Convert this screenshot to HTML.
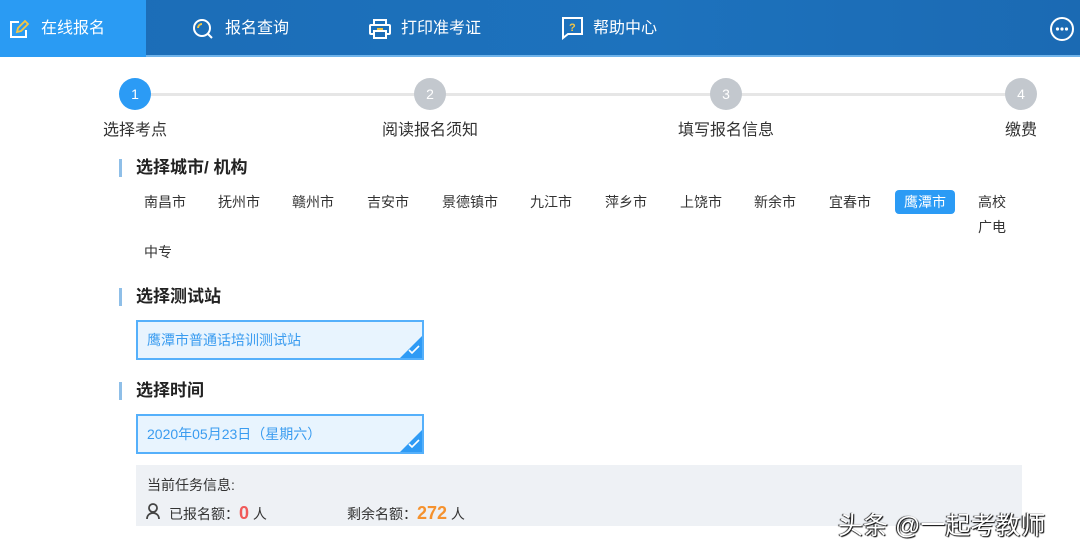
<!DOCTYPE html>
<html><head><meta charset="utf-8"><style>
*{margin:0;padding:0;box-sizing:border-box}
body{width:1080px;height:526px;overflow:hidden;background:#fff;font-family:"Liberation Sans","Noto Sans CJK SC",sans-serif;position:relative;color:#333}
.hdr{position:absolute;left:0;top:0;width:1080px;height:57px;background:linear-gradient(90deg,#1b6cb6,#1d72bd 60%,#1b6ab3);border-bottom:2px solid #6fb3ea}
.tab1{position:absolute;left:0;top:0;width:146px;height:57px;background:#2a9bf3}
.nav{position:absolute;top:18px;color:#fff;font-size:16px;line-height:22px}
.ic{position:absolute}
.abs{position:absolute;white-space:nowrap}
.line{position:absolute;top:93px;left:135px;width:886px;height:3px;background:#e6e6e6}
.c{position:absolute;top:78px;width:32px;height:32px;border-radius:50%;background:#c3c8ce;color:#fff;font-size:14px;text-align:center;line-height:32px}
.lbl{position:absolute;top:116px;font-size:16px;color:#333}
.sec{position:absolute;left:119px;font-size:17px;font-weight:bold;color:#222;padding-left:14px;border-left:3px solid #8fbfe8;line-height:18px}
.city{position:absolute;font-size:14px;color:#333;line-height:20px}
.box{position:absolute;left:136px;width:288px;height:40px;background:#e8f4fe;border:2px solid #55b0fb;color:#3a9cf0;font-size:14px;padding-left:9px;line-height:36px;overflow:hidden}
.box:after{content:"";position:absolute;right:0;bottom:0;border-style:solid;border-width:0 0 22px 22px;border-color:transparent transparent #2f9bf5 transparent}
.box svg{position:absolute;right:2px;bottom:3px;z-index:2}
</style></head><body>
<div class="hdr"></div>
<div class="tab1"></div>
<svg class="ic" style="left:9px;top:19px" width="22" height="20" viewBox="0 0 22 20"><path d="M10 3H2v15h15v-7" fill="none" stroke="#fff" stroke-width="2"/><path d="M8 13l1-4 7-7 3 3-7 7z" fill="none" stroke="#f5c542" stroke-width="1.8"/></svg>
<div class="nav" style="left:41px">在线报名</div>
<svg class="ic" style="left:192px;top:18px" width="24" height="22" viewBox="0 0 24 22"><circle cx="10" cy="10" r="8" fill="none" stroke="#fff" stroke-width="2"/><path d="M6 10a4 4 0 0 1 4-4" stroke="#f5c542" stroke-width="2" fill="none"/><path d="M16 16l4 4" stroke="#fff" stroke-width="2"/></svg>
<div class="nav" style="left:225px">报名查询</div>
<svg class="ic" style="left:368px;top:18px" width="24" height="22" viewBox="0 0 24 22"><rect x="6" y="2" width="12" height="5" fill="none" stroke="#fff" stroke-width="2"/><rect x="2" y="7" width="20" height="9" rx="1" fill="none" stroke="#fff" stroke-width="2"/><rect x="6" y="13" width="12" height="7" fill="#1b6cb6" stroke="#fff" stroke-width="2"/><path d="M9 11h6" stroke="#f5c542" stroke-width="2"/></svg>
<div class="nav" style="left:401px">打印准考证</div>
<svg class="ic" style="left:560px;top:16px" width="24" height="24" viewBox="0 0 24 24"><path d="M2 2h20v16H8l-5 4V2z" fill="none" stroke="#fff" stroke-width="2"/><text x="9" y="15" font-size="11" font-weight="bold" fill="#f5c542" font-family="Liberation Sans">?</text></svg>
<div class="nav" style="left:593px">帮助中心</div>
<svg class="ic" style="left:1049px;top:16px" width="27" height="27" viewBox="0 0 27 27"><circle cx="13" cy="13" r="11" fill="none" stroke="#fff" stroke-width="2"/><circle cx="8.5" cy="13" r="1.6" fill="#fff"/><circle cx="13" cy="13" r="1.6" fill="#fff"/><circle cx="17.5" cy="13" r="1.6" fill="#fff"/></svg>

<div class="line"></div>
<div class="c" style="left:119px;background:#2b9bf5">1</div>
<div class="c" style="left:414px">2</div>
<div class="c" style="left:710px">3</div>
<div class="c" style="left:1005px">4</div>
<div class="lbl" style="left:103px">选择考点</div>
<div class="lbl" style="left:382px">阅读报名须知</div>
<div class="lbl" style="left:678px">填写报名信息</div>
<div class="lbl" style="left:1005px">缴费</div>

<div class="sec" style="top:159px">选择城市/ 机构</div>
<div class="city" style="left:144px;top:192px">南昌市</div>
<div class="city" style="left:218px;top:192px">抚州市</div>
<div class="city" style="left:292px;top:192px">赣州市</div>
<div class="city" style="left:367px;top:192px">吉安市</div>
<div class="city" style="left:442px;top:192px">景德镇市</div>
<div class="city" style="left:530px;top:192px">九江市</div>
<div class="city" style="left:605px;top:192px">萍乡市</div>
<div class="city" style="left:680px;top:192px">上饶市</div>
<div class="city" style="left:754px;top:192px">新余市</div>
<div class="city" style="left:829px;top:192px">宜春市</div>
<div class="city" style="left:895px;top:190px;width:60px;height:24px;background:#2b9bf5;color:#fff;border-radius:4px;text-align:center;line-height:24px">鹰潭市</div>
<div class="city" style="left:978px;top:192px">高校</div>
<div class="city" style="left:978px;top:217px">广电</div>
<div class="city" style="left:144px;top:242px">中专</div>

<div class="sec" style="top:288px">选择测试站</div>
<div class="box" style="top:320px">鹰潭市普通话培训测试站<svg width="12" height="10" viewBox="0 0 12 10"><path d="M1 5l3 3 7-7" stroke="#fff" stroke-width="1.6" fill="none"/></svg></div>
<div class="sec" style="top:382px">选择时间</div>
<div class="box" style="top:414px">2020年05月23日（星期六）<svg width="12" height="10" viewBox="0 0 12 10"><path d="M1 5l3 3 7-7" stroke="#fff" stroke-width="1.6" fill="none"/></svg></div>

<div class="abs" style="left:136px;top:465px;width:886px;height:61px;background:#eef1f5"></div>
<div class="abs" style="left:147px;top:475px;font-size:14px;color:#333">当前任务信息:</div>
<svg class="ic" style="left:146px;top:503px" width="14" height="16" viewBox="0 0 14 16"><circle cx="7" cy="5" r="4" fill="none" stroke="#444" stroke-width="1.8"/><path d="M1 16c0-4 3-6 6-6s6 2 6 6" fill="none" stroke="#444" stroke-width="1.8"/></svg>
<div class="abs" style="left:169px;top:503px;font-size:14px;color:#333">已报名额：<span style="color:#f05a5a;font-size:18px;font-weight:bold">0</span> 人</div>
<div class="abs" style="left:347px;top:503px;font-size:14px;color:#333">剩余名额：<span style="color:#f5922f;font-size:18px;font-weight:bold">272</span> 人</div>
<div class="abs" style="left:838px;top:506px;font-size:25px;color:#fff;text-shadow:1px 1px 1px #000,-1px 0 1px #000">头条 @一起考教师</div>
</body></html>
